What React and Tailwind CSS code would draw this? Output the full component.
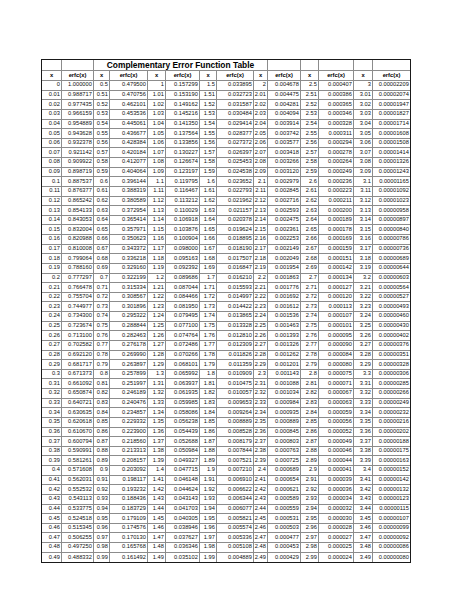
import React from "react";

function erfc(x) {
  if (x === 0) return 1;
  let term = x;
  let sum = x;
  for (let n = 1; n < 400; n++) {
    term *= (2 * x * x) / (2 * n + 1);
    sum += term;
    if (term < 1e-18 * sum) break;
  }
  const erf = (2 / Math.sqrt(Math.PI)) * Math.exp(-x * x) * sum;
  return 1 - erf;
}

const cellBase =
  "flex items-center justify-end pr-[1.2px] overflow-hidden whitespace-nowrap text-[5.7px] leading-none text-[#111]";

function Cell({ children, last, bottom }) {
  let cls = cellBase;
  if (last && bottom) cls += " border-0";
  else if (last) cls += " border-b border-[#8c8c8c]";
  else if (bottom) cls += " border-r border-[#8c8c8c]";
  else cls += " border-r border-b border-[#8c8c8c]";
  return <div className={cls}>{children}</div>;
}

function HeadCell({ children, last }) {
  const cls = last
    ? "flex items-center justify-center border-b border-[#8c8c8c] text-[5.8px] font-bold leading-none text-[#000]"
    : "flex items-center justify-center border-r border-b border-[#8c8c8c] text-[5.8px] font-bold leading-none text-[#000]";
  return <div className={cls}>{children}</div>;
}

function EmptyTop({ last }) {
  return (
    <div
      className={
        last
          ? "border-b border-[#8c8c8c]"
          : "border-r border-b border-[#8c8c8c]"
      }
    />
  );
}

export default function App() {
  const rows = [];
  for (let r = 0; r < 50; r++) {
    for (let p = 0; p < 7; p++) {
      const i = p * 50 + r;
      const x = i / 100;
      const v = erfc(x);
      const bottom = r === 49;
      rows.push(
        <Cell key={"x" + i} bottom={bottom}>
          {String(x)}
        </Cell>
      );
      rows.push(
        <Cell key={"e" + i} bottom={bottom} last={p === 6}>
          {p === 6 ? v.toFixed(8) : v.toFixed(6)}
        </Cell>
      );
    }
  }

  const heads = [];
  for (let p = 0; p < 7; p++) {
    heads.push(<HeadCell key={"hx" + p}>x</HeadCell>);
    heads.push(
      <HeadCell key={"he" + p} last={p === 6}>
        erfc(x)
      </HeadCell>
    );
  }

  return (
    <div
      className="min-h-[613px] w-[474px] bg-white pl-[41px] pt-[54px]"
      style={{ fontFamily: '"Liberation Sans", Arial, sans-serif' }}
    >
      <div className="inline-block border-[1.5px] border-[#1a1a1a]">
        <div className="grid grid-cols-[20px_32px_16px_38px_18px_34px_17px_37px_14px_33px_18px_35px_19px_37px] grid-rows-[11px_10px] auto-rows-[9.64px]">
          <EmptyTop />
          <EmptyTop />
          <div className="col-span-7 flex items-center justify-center border-r border-b border-[#8c8c8c] text-[8.4px] font-bold leading-none text-[#000]">
            Complementary Error Function Table
          </div>
          <EmptyTop />
          <EmptyTop />
          <EmptyTop />
          <EmptyTop />
          <EmptyTop last />
          {heads}
          {rows}
        </div>
      </div>
    </div>
  );
}
